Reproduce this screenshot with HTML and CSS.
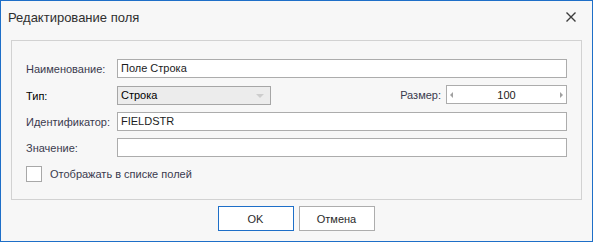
FILE: index.html
```html
<!DOCTYPE html>
<html lang="ru">
<head>
    <meta charset="UTF-8">
    <title>Редактирование поля</title>
    <link rel="stylesheet" href="styles.css">
</head>
<body>
<div class="window">
    <div class="titlebar">
        <span class="title">Редактирование поля</span>
        <svg class="close" width="10" height="10" viewBox="0 0 10 10">
            <path d="M0.5 0.5 L9.5 9.5 M9.5 0.5 L0.5 9.5" stroke="#3c3c3c" stroke-width="1.4" fill="none"/>
        </svg>
    </div>

    <div class="panel">
        <div class="row">
            <label class="label">Наименование:</label>
            <div class="input">Поле Строка</div>
        </div>
        <div class="row row-type">
            <label class="label label-dark">Тип:</label>
            <div class="combo">
                <span>Строка</span>
                <span class="combo-arrow"></span>
            </div>
            <div class="size">
                <label class="label">Размер:</label>
                <div class="spin">
                    <span class="spin-left"></span>
                    <span class="spin-value">100</span>
                    <span class="spin-right"></span>
                </div>
            </div>
        </div>
        <div class="row">
            <label class="label">Идентификатор:</label>
            <div class="input">FIELDSTR</div>
        </div>
        <div class="row row-value">
            <label class="label">Значение:</label>
            <div class="input"></div>
        </div>
        <div class="check-row">
            <span class="checkbox"></span>
            <span class="label">Отображать в списке полей</span>
        </div>
    </div>

    <div class="buttons">
        <button class="btn btn-default">OK</button>
        <button class="btn">Отмена</button>
    </div>
</div>
</body>
</html>
```

FILE: styles.css
```css
body {
    margin: 0;
    font-family: 'Liberation Sans', Arial, sans-serif;
    font-size: 11px;
    background-color: #f7f7f7;
}

.window {
    width: 593px;
    height: 242px;
    box-sizing: border-box;
    border: 1px solid #1e6fc8;
    background-color: #f7f7f7;
    display: flex;
    flex-direction: column;
}

.titlebar {
    height: 32px;
    display: flex;
    align-items: center;
    justify-content: space-between;
    padding: 0 16px 0 7px;
}

.title {
    font-size: 13px;
    color: #2f2f2f;
}

.close {
    display: block;
}

.panel {
    margin: 7px 10px 0 10px;
    height: 160px;
    box-sizing: border-box;
    border: 1px solid #d2d2d2;
    padding: 18px 14px 0 14px;
    display: flex;
    flex-direction: column;
}

.row {
    display: flex;
    align-items: center;
    height: 19px;
    margin-bottom: 8px;
}

.row-type {
    margin-bottom: 7px;
}

.row-value {
    margin-top: -1px;
    margin-bottom: 9px;
}

.label {
    color: #3a3a4e;
    white-space: nowrap;
}

.row > .label {
    width: 91px;
    flex-shrink: 0;
}

.label-dark {
    color: #000;
}

.input {
    flex: 1;
    height: 19px;
    box-sizing: border-box;
    border: 1px solid #acacac;
    background-color: #fff;
    padding: 0 3px;
    line-height: 17px;
    color: #1c1c1c;
}

.combo {
    width: 154px;
    height: 19px;
    box-sizing: border-box;
    border: 1px solid #a6a6a6;
    background-color: #ececec;
    padding: 0 3px;
    line-height: 17px;
    color: #000;
    display: flex;
    justify-content: space-between;
    align-items: center;
}

.combo-arrow {
    width: 0;
    height: 0;
    border-left: 4px solid transparent;
    border-right: 4px solid transparent;
    border-top: 4px solid #cdcdcd;
    margin-right: 3px;
}

.size {
    margin-left: auto;
    display: flex;
    align-items: center;
    gap: 5px;
    margin-top: -2px;
}

.spin {
    width: 121px;
    height: 19px;
    box-sizing: border-box;
    border: 1px solid #acacac;
    background-color: #fff;
    display: flex;
    align-items: center;
    justify-content: space-between;
    padding: 0 3px;
}

.spin-value {
    color: #1c1c1c;
}

.spin-left,
.spin-right {
    width: 0;
    height: 0;
    border-top: 3px solid transparent;
    border-bottom: 3px solid transparent;
}

.spin-left {
    border-right: 3px solid #a0a0a0;
}

.spin-right {
    border-left: 3px solid #a0a0a0;
}

.check-row {
    display: flex;
    align-items: center;
    gap: 8px;
}

.checkbox {
    width: 16px;
    height: 16px;
    box-sizing: border-box;
    border: 1px solid #a8a8a8;
    background-color: #fff;
}

.buttons {
    display: flex;
    justify-content: center;
    gap: 5px;
    margin-top: 6px;
    padding-right: 1px;
}

.btn {
    width: 76px;
    height: 25px;
    box-sizing: border-box;
    border: 1px solid #adadad;
    background-color: #fff;
    font-family: 'Liberation Sans', Arial, sans-serif;
    font-size: 11px;
    color: #2a2a2a;
    padding: 0;
    cursor: pointer;
}

.btn-default {
    border-color: #1e6fc8;
}
```
